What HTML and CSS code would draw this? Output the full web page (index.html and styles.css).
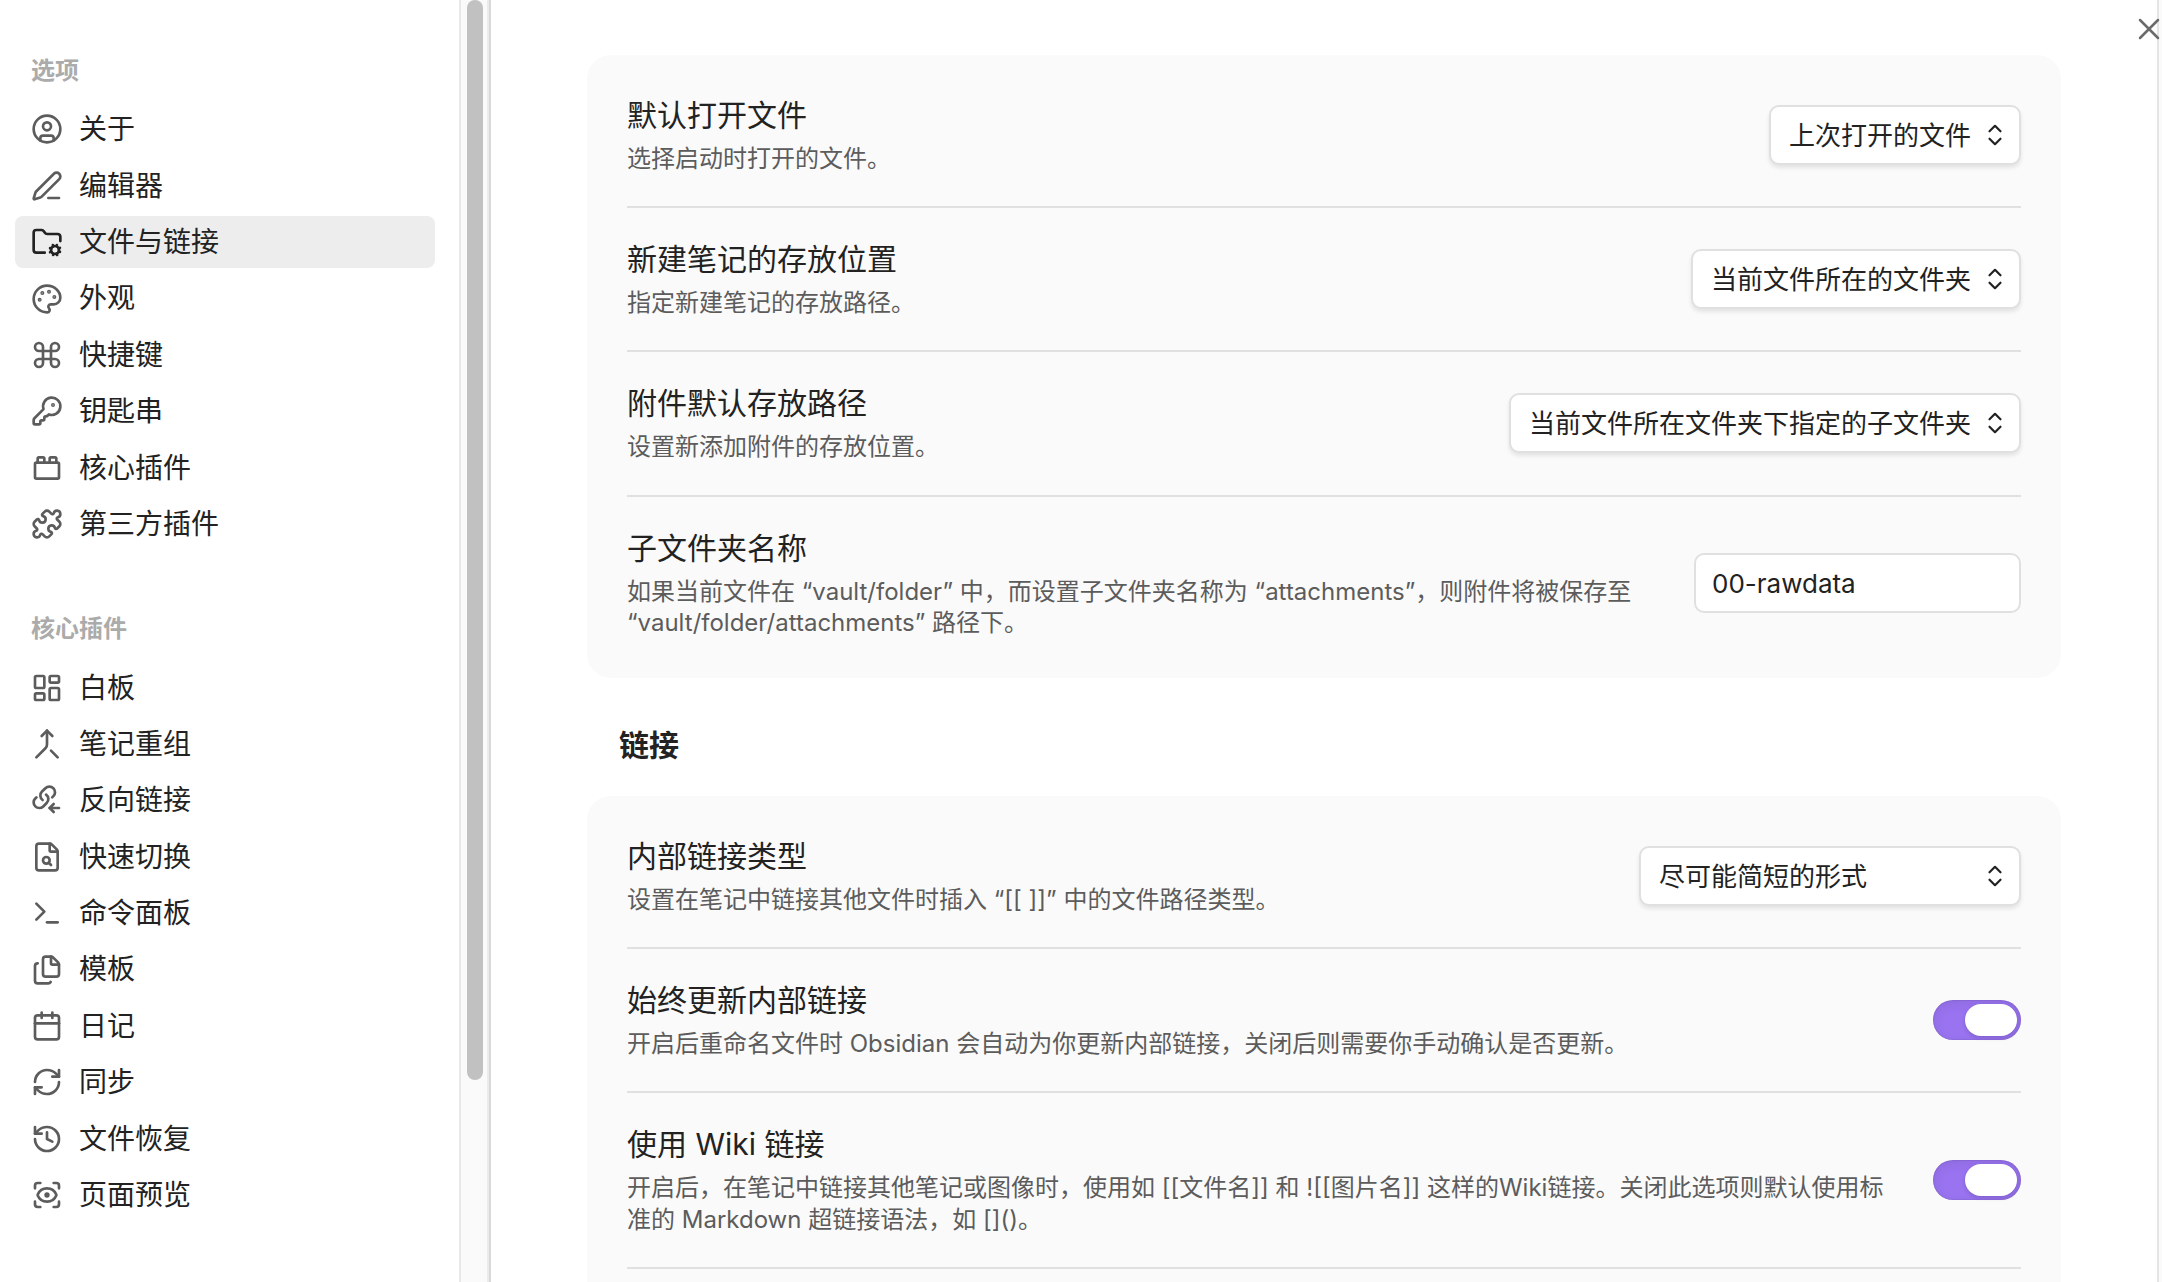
FILE: index.html
```html
<!DOCTYPE html>
<html lang="zh-CN">
<head>
    <meta charset="UTF-8">
    <meta name="viewport" content="width=device-width, initial-scale=1.0">
    <title>设置</title>
    <link rel="stylesheet" href="styles.css">
</head>
<body>
    <div class="modal">
        <aside class="sidebar">
            <nav class="nav">
                <section class="nav-group">
                    <h2 class="nav-title">选项</h2>
                    <ul class="nav-list">
                        <li><a class="nav-item" href="#about">
                            <svg class="icon" viewBox="0 0 24 24"><circle cx="12" cy="12" r="10"/><circle cx="12" cy="10" r="3"/><path d="M7 20.662V19a2 2 0 0 1 2-2h6a2 2 0 0 1 2 2v1.662"/></svg>
                            <span>关于</span>
                        </a></li>
                        <li><a class="nav-item" href="#editor">
                            <svg class="icon" viewBox="0 0 24 24"><path d="M13 21h8"/><path d="M21.174 6.812a1 1 0 0 0-3.986-3.987L3.842 16.174a2 2 0 0 0-.5.83l-1.321 4.352a.5.5 0 0 0 .623.622l4.353-1.32a2 2 0 0 0 .83-.497z"/></svg>
                            <span>编辑器</span>
                        </a></li>
                        <li><a class="nav-item active" href="#file">
                            <svg class="icon" viewBox="0 0 24 24"><path d="M10.3 20H4a2 2 0 0 1-2-2V5a2 2 0 0 1 2-2h3.9a2 2 0 0 1 1.69.9l.81 1.2a2 2 0 0 0 1.67.9H20a2 2 0 0 1 2 2v3.3"/><circle cx="18" cy="18" r="3"/><path d="m21.7 19.4-.9-.3"/><path d="m15.2 16.9-.9-.3"/><path d="m16.6 21.7.3-.9"/><path d="m19.1 15.2.3-.9"/><path d="m19.6 21.7-.4-1"/><path d="m16.8 15.3-.4-1"/><path d="m14.3 19.6 1-.4"/><path d="m20.7 16.8 1-.4"/></svg>
                            <span>文件与链接</span>
                        </a></li>
                        <li><a class="nav-item" href="#appearance">
                            <svg class="icon" viewBox="0 0 24 24"><path d="M12 22a1 1 0 0 1 0-20 10 9 0 0 1 10 9 5 5 0 0 1-5 5h-2.25a1.75 1.75 0 0 0-1.4 2.8l.3.4a1.75 1.75 0 0 1-1.4 2.8z"/><g class="dot"><circle cx="13.5" cy="6.5" r=".5"/><circle cx="17.5" cy="10.5" r=".5"/><circle cx="6.5" cy="12.5" r=".5"/><circle cx="8.5" cy="7.5" r=".5"/></g></svg>
                            <span>外观</span>
                        </a></li>
                        <li><a class="nav-item" href="#hotkeys">
                            <svg class="icon" viewBox="0 0 24 24"><path d="M15 6v12a3 3 0 1 0 3-3H6a3 3 0 1 0 3 3V6a3 3 0 1 0-3 3h12a3 3 0 1 0-3-3"/></svg>
                            <span>快捷键</span>
                        </a></li>
                        <li><a class="nav-item" href="#keychain">
                            <svg class="icon" viewBox="0 0 24 24"><path d="M2.586 17.414A2 2 0 0 0 2 18.828V21a1 1 0 0 0 1 1h3a1 1 0 0 0 1-1v-1a1 1 0 0 1 1-1h1a1 1 0 0 0 1-1v-1a1 1 0 0 1 1-1h.172a2 2 0 0 0 1.414-.586l.814-.814a6.5 6.5 0 1 0-4-4z"/><circle class="dot" cx="16.5" cy="7.5" r=".5"/></svg>
                            <span>钥匙串</span>
                        </a></li>
                        <li><a class="nav-item" href="#core-plugins">
                            <svg class="icon" viewBox="0 0 24 24"><rect width="18" height="12" x="3" y="8" rx="1"/><path d="M10 8V5c0-.6-.4-1-1-1H6a1 1 0 0 0-1 1v3"/><path d="M19 8V5c0-.6-.4-1-1-1h-3a1 1 0 0 0-1 1v3"/></svg>
                            <span>核心插件</span>
                        </a></li>
                        <li><a class="nav-item" href="#community-plugins">
                            <svg class="icon" viewBox="0 0 24 24"><path d="M15.39 4.39a1 1 0 0 0 1.68-.474 2.5 2.5 0 1 1 3.014 3.015 1 1 0 0 0-.474 1.68l1.683 1.682a2.414 2.414 0 0 1 0 3.414L19.61 15.39a1 1 0 0 1-1.68-.474 2.5 2.5 0 1 0-3.014 3.015 1 1 0 0 1 .474 1.68l-1.683 1.682a2.414 2.414 0 0 1-3.414 0L8.61 19.61a1 1 0 0 0-1.68.474 2.5 2.5 0 1 1-3.014-3.015 1 1 0 0 0 .474-1.68l-1.683-1.682a2.414 2.414 0 0 1 0-3.414L4.39 8.61a1 1 0 0 1 1.68.474 2.5 2.5 0 1 0 3.014-3.015 1 1 0 0 1-.474-1.68l1.683-1.682a2.414 2.414 0 0 1 3.414 0z"/></svg>
                            <span>第三方插件</span>
                        </a></li>
                    </ul>
                </section>
                <section class="nav-group">
                    <h2 class="nav-title">核心插件</h2>
                    <ul class="nav-list">
                        <li><a class="nav-item" href="#canvas">
                            <svg class="icon" viewBox="0 0 24 24"><rect width="7" height="9" x="3" y="3" rx="1"/><rect width="7" height="5" x="14" y="3" rx="1"/><rect width="7" height="9" x="14" y="12" rx="1"/><rect width="7" height="5" x="3" y="16" rx="1"/></svg>
                            <span>白板</span>
                        </a></li>
                        <li><a class="nav-item" href="#note-composer">
                            <svg class="icon" viewBox="0 0 24 24"><path d="m8 6 4-4 4 4"/><path d="M12 2v10.3a4 4 0 0 1-1.172 2.872L4 22"/><path d="m20 22-5-5"/></svg>
                            <span>笔记重组</span>
                        </a></li>
                        <li><a class="nav-item" href="#backlink">
                            <svg class="icon" viewBox="0 0 24 24"><path d="M8.705 12a4 4 0 0 1-1.694-3.053 4 4 0 0 1 1.235-3.26l2.55-2.512a4.25 4.25 0 0 1 5.959.051 4.1 4.1 0 0 1 .052 5.869l-.906.905"/><path d="M11.295 8a4 4 0 0 1 1.694 3.053 4 4 0 0 1-1.235 3.26l-2.55 2.512a4.25 4.25 0 0 1-5.959-.051 4.1 4.1 0 0 1-.052-5.869L4.099 10"/><path d="m17 21-3-3 3-3"/><path d="M21 18h-7"/></svg>
                            <span>反向链接</span>
                        </a></li>
                        <li><a class="nav-item" href="#switcher">
                            <svg class="icon" viewBox="0 0 24 24"><path d="M6 22a2 2 0 0 1-2-2V4a2 2 0 0 1 2-2h8a2.4 2.4 0 0 1 1.704.706l3.588 3.588A2.4 2.4 0 0 1 20 8v12a2 2 0 0 1-2 2z"/><path d="M14 2v5a1 1 0 0 0 1 1h5"/><circle cx="11.5" cy="14.5" r="2.5"/><path d="M13.3 16.3 15 18"/></svg>
                            <span>快速切换</span>
                        </a></li>
                        <li><a class="nav-item" href="#command-palette">
                            <svg class="icon" viewBox="0 0 24 24"><path d="M12 19h8"/><path d="m4 17 6-6-6-6"/></svg>
                            <span>命令面板</span>
                        </a></li>
                        <li><a class="nav-item" href="#templates">
                            <svg class="icon" viewBox="0 0 24 24"><path d="M15 2h-4a2 2 0 0 0-2 2v11a2 2 0 0 0 2 2h8a2 2 0 0 0 2-2V8"/><path d="M16.706 2.706A2.4 2.4 0 0 0 15 2v5a1 1 0 0 0 1 1h5a2.4 2.4 0 0 0-.706-1.706z"/><path d="M5 7a2 2 0 0 0-2 2v11a2 2 0 0 0 2 2h8a2 2 0 0 0 1.732-1"/></svg>
                            <span>模板</span>
                        </a></li>
                        <li><a class="nav-item" href="#daily-notes">
                            <svg class="icon" viewBox="0 0 24 24"><path d="M8 2v4"/><path d="M16 2v4"/><rect width="18" height="18" x="3" y="4" rx="2"/><path d="M3 10h18"/></svg>
                            <span>日记</span>
                        </a></li>
                        <li><a class="nav-item" href="#sync">
                            <svg class="icon" viewBox="0 0 24 24"><path d="M3 12a9 9 0 0 1 9-9 9.75 9.75 0 0 1 6.74 2.74L21 8"/><path d="M21 3v5h-5"/><path d="M21 12a9 9 0 0 1-9 9 9.75 9.75 0 0 1-6.74-2.74L3 16"/><path d="M8 16H3v5"/></svg>
                            <span>同步</span>
                        </a></li>
                        <li><a class="nav-item" href="#file-recovery">
                            <svg class="icon" viewBox="0 0 24 24"><path d="M3 12a9 9 0 1 0 9-9 9.75 9.75 0 0 0-6.74 2.74L3 8"/><path d="M3 3v5h5"/><path d="M12 7v5l4 2"/></svg>
                            <span>文件恢复</span>
                        </a></li>
                        <li><a class="nav-item" href="#page-preview">
                            <svg class="icon" viewBox="0 0 24 24"><path d="M3 7V5a2 2 0 0 1 2-2h2"/><path d="M17 3h2a2 2 0 0 1 2 2v2"/><path d="M21 17v2a2 2 0 0 1-2 2h-2"/><path d="M7 21H5a2 2 0 0 1-2-2v-2"/><circle class="dot" cx="12" cy="12" r="1"/><path d="M18.944 12.33a1 1 0 0 0 0-.66 7.5 7.5 0 0 0-13.888 0 1 1 0 0 0 0 .66 7.5 7.5 0 0 0 13.888 0"/></svg>
                            <span>页面预览</span>
                        </a></li>
                    </ul>
                </section>
            </nav>
            <div class="scrollbar"><div class="scrollbar-thumb"></div></div>
        </aside>

        <main class="content">
            <section class="card">
                <div class="setting">
                    <div class="setting-info">
                        <label class="setting-name" for="open-file">默认打开文件</label>
                        <p class="setting-desc">选择启动时打开的文件。</p>
                    </div>
                    <div class="dropdown">
                        <select id="open-file">
                            <option>上次打开的文件</option>
                        </select>
                        <svg class="chevrons" viewBox="0 0 16 24"><path d="m2 8 6-6 6 6"/><path d="m2 16 6 6 6-6"/></svg>
                    </div>
                </div>
                <div class="setting">
                    <div class="setting-info">
                        <label class="setting-name" for="note-location">新建笔记的存放位置</label>
                        <p class="setting-desc">指定新建笔记的存放路径。</p>
                    </div>
                    <div class="dropdown">
                        <select id="note-location">
                            <option>当前文件所在的文件夹</option>
                        </select>
                        <svg class="chevrons" viewBox="0 0 16 24"><path d="m2 8 6-6 6 6"/><path d="m2 16 6 6 6-6"/></svg>
                    </div>
                </div>
                <div class="setting">
                    <div class="setting-info">
                        <label class="setting-name" for="attachment-location">附件默认存放路径</label>
                        <p class="setting-desc">设置新添加附件的存放位置。</p>
                    </div>
                    <div class="dropdown">
                        <select id="attachment-location">
                            <option>当前文件所在文件夹下指定的子文件夹</option>
                        </select>
                        <svg class="chevrons" viewBox="0 0 16 24"><path d="m2 8 6-6 6 6"/><path d="m2 16 6 6 6-6"/></svg>
                    </div>
                </div>
                <div class="setting">
                    <div class="setting-info">
                        <label class="setting-name" for="subfolder">子文件夹名称</label>
                        <p class="setting-desc">如果当前文件在 “vault/folder” 中，而设置子文件夹名称为 “attachments”，则附件将被保存至 “vault/folder/attachments” 路径下。</p>
                    </div>
                    <input class="text-input" type="text" id="subfolder" value="00-rawdata">
                </div>
            </section>

            <h2 class="content-title">链接</h2>

            <section class="card">
                <div class="setting">
                    <div class="setting-info">
                        <label class="setting-name" for="link-format">内部链接类型</label>
                        <p class="setting-desc">设置在笔记中链接其他文件时插入 “[[ ]]” 中的文件路径类型。</p>
                    </div>
                    <div class="dropdown dropdown-wide">
                        <select id="link-format">
                            <option>尽可能简短的形式</option>
                        </select>
                        <svg class="chevrons" viewBox="0 0 16 24"><path d="m2 8 6-6 6 6"/><path d="m2 16 6 6 6-6"/></svg>
                    </div>
                </div>
                <div class="setting">
                    <div class="setting-info">
                        <label class="setting-name" for="update-links">始终更新内部链接</label>
                        <p class="setting-desc">开启后重命名文件时 Obsidian 会自动为你更新内部链接，关闭后则需要你手动确认是否更新。</p>
                    </div>
                    <input class="toggle" type="checkbox" id="update-links" checked>
                </div>
                <div class="setting">
                    <div class="setting-info">
                        <label class="setting-name" for="wiki-links">使用 Wiki 链接</label>
                        <p class="setting-desc">开启后，在笔记中链接其他笔记或图像时，使用如 [[文件名]] 和 ![[图片名]] 这样的Wiki链接。关闭此选项则默认使用标准的 Markdown 超链接语法，如 []()。</p>
                    </div>
                    <input class="toggle" type="checkbox" id="wiki-links" checked>
                </div>
                <div class="setting"></div>
            </section>
        </main>

        <button class="close" type="button" aria-label="关闭">
            <svg viewBox="0 0 24 24"><path d="M3 3l18 18"/><path d="M21 3 3 21"/></svg>
        </button>
    </div>
</body>
</html>
```

FILE: styles.css
```css
* {
    box-sizing: border-box;
}

body {
    margin: 0;
    background: #fafafa;
    color: #222;
    font-family: Inter, "Noto Sans CJK SC", sans-serif;
    font-size: 28px;
    line-height: 1.3;
}

h2, p, ul {
    margin: 0;
    padding: 0;
}

svg {
    fill: none;
    stroke: currentColor;
    stroke-linecap: round;
    stroke-linejoin: round;
}

.modal {
    position: relative;
    display: flex;
    height: 100vh;
    margin-right: 3px;
    border-right: 2px solid #e5e5e5;
    background: #fff;
}

/* sidebar */
.sidebar {
    flex: none;
    display: flex;
    overflow: hidden;
    border-right: 2px solid #d9d9d9;
}

.nav {
    display: flex;
    flex-direction: column;
    gap: 63px;
    width: 459px;
    padding: 55px 24px 0 15px;
}

.nav-title {
    padding-left: 16px;
    margin-bottom: 17px;
    color: #ababab;
    font-size: 24px;
    font-weight: 700;
}

.nav-list {
    display: flex;
    flex-direction: column;
    gap: 4px;
    list-style: none;
}

.nav-item {
    display: flex;
    align-items: center;
    gap: 16px;
    padding: 8px 16px;
    border-radius: 8px;
    color: #222;
    text-decoration: none;
}

.nav-item.active {
    background: #ededed;
}

.icon {
    flex: none;
    width: 32px;
    height: 32px;
    color: #5c5c5c;
    stroke-width: 2;
}

.active .icon {
    color: #222;
}

.dot {
    fill: currentColor;
}

.scrollbar {
    width: 30px;
    padding: 0 6px;
    border-left: 2px solid #e8e8e8;
    border-right: 2px solid #ebebeb;
    background: #fafafa;
}

.scrollbar-thumb {
    width: 16px;
    height: 1080px;
    max-height: 100%;
    border-radius: 8px;
    background: #c1c1c1;
}

/* settings */
.content {
    flex: 1;
    padding: 55px 96px 0;
    overflow: hidden;
}

.card {
    padding: 9px 40px 8px;
    border-radius: 24px;
    background: #fafafa;
}

.content-title {
    padding: 48px 32px 31px;
    font-size: 30px;
    font-weight: 700;
}

.setting {
    display: flex;
    align-items: center;
    gap: 32px;
    padding: 32px 0;
}

.setting + .setting {
    border-top: 2px solid #e0e0e0;
}

.setting-info {
    flex: 1;
}

.setting-name {
    display: block;
    font-size: 30px;
}

.setting-desc {
    margin-top: 8px;
    color: #5c5c5c;
    font-size: 24px;
}

.dropdown {
    position: relative;
}

.dropdown select {
    display: block;
    width: 100%;
    height: 60px;
    padding: 0 47px 0 18px;
    appearance: none;
    border: 2px solid #e0e0e0;
    border-radius: 10px;
    background: #fff;
    box-shadow: 0 3px 4px rgba(0, 0, 0, 0.09);
    color: #222;
    font-family: inherit;
    font-size: 26px;
}

.dropdown-wide {
    width: 382px;
}

.chevrons {
    position: absolute;
    top: 19px;
    right: 18px;
    width: 16px;
    height: 22px;
    stroke-width: 2.4;
    pointer-events: none;
}

.text-input {
    width: 327px;
    height: 60px;
    padding: 0 16px;
    border: 2px solid #e0e0e0;
    border-radius: 10px;
    background: #fff;
    color: #222;
    font-family: inherit;
    font-size: 26px;
}

.toggle {
    display: flex;
    width: 88px;
    height: 40px;
    margin: 0;
    padding: 4px;
    appearance: none;
    border-radius: 20px;
    background: #9973f0;
    box-shadow: inset 0 4px 12px rgba(0, 0, 0, 0.07), inset 0 0 2px rgba(0, 0, 0, 0.21);
    cursor: pointer;
}

.toggle::after {
    content: "";
    width: 52px;
    height: 32px;
    border-radius: 16px;
    background: #fff;
    box-shadow: 0 2px 4px rgba(0, 0, 0, 0.15);
}

.toggle:checked {
    justify-content: flex-end;
}

.close {
    position: absolute;
    top: 17px;
    right: -4px;
    width: 24px;
    height: 24px;
    padding: 0;
    border: none;
    background: none;
    color: #6b6b6b;
    cursor: pointer;
}

.close svg {
    display: block;
    stroke-width: 2.5;
}
```
